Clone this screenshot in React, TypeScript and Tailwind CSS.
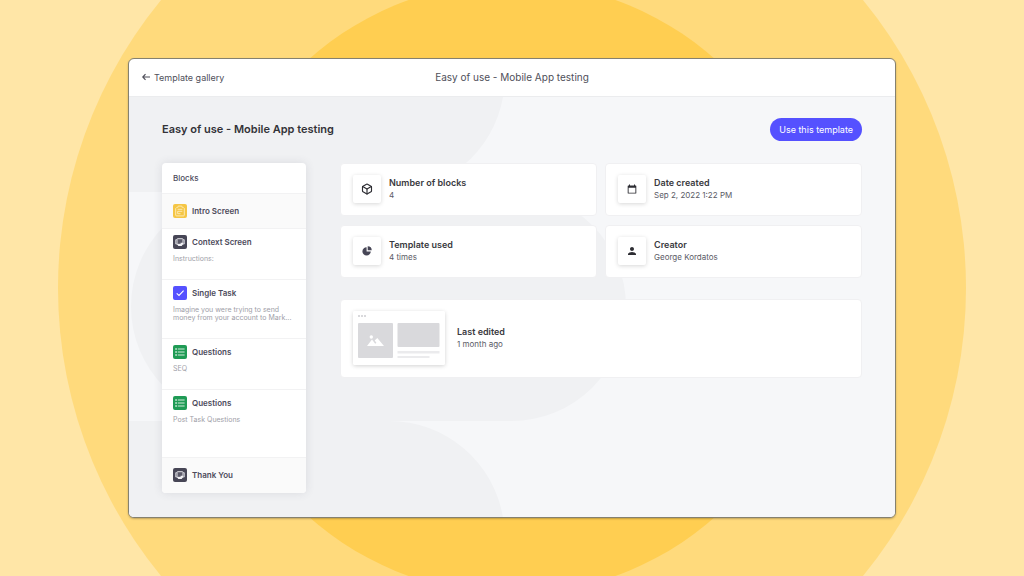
import type { ReactNode } from "react";
import { Box } from "lucide-react";
import { MdPerson } from "react-icons/md";

type BlockKind = "intro" | "screen" | "task" | "questions";

interface Block {
  kind: BlockKind;
  title: string;
  note?: string;
  className: string;
}

const blocks: Block[] = [
  { kind: "intro", title: "Intro Screen", className: "bg-[#fafafa] py-[10px] border-b" },
  { kind: "screen", title: "Context Screen", note: "Instructions:", className: "pt-[6px] pb-4 border-b" },
  {
    kind: "task",
    title: "Single Task",
    note: "Imagine you were trying to send money from your account to Mark...",
    className: "pt-[6px] pb-4 border-b",
  },
  { kind: "questions", title: "Questions", note: "SEQ", className: "pt-[6px] pb-4 border-b" },
  { kind: "questions", title: "Questions", note: "Post Task Questions", className: "grow pt-[6px] pb-4 border-b" },
  { kind: "screen", title: "Thank You", className: "bg-[#fafafa] pt-[10px] pb-[11px]" },
];

function BlockIcon({ kind }: { kind: BlockKind }) {
  if (kind === "intro") {
    return (
      <svg viewBox="0 0 14 14" className="size-[14px] shrink-0" aria-hidden="true">
        <rect width="14" height="14" rx="2" fill="#f5c645" />
        <g fill="none" stroke="#fff3cd" strokeWidth="0.8">
          <path d="M4.5 3.3h-.6L2.700 4.500v6.600a.8.8 0 0 0 .8.8h7a.8.8 0 0 0 .8-.8V4.500l-1.200-1.200h-.6" />
          <path d="M4.800 3.600V3a.9.9 0 0 1 .9-.9h2.600a.9.9 0 0 1 .9.900v.6" />
          <path d="M4.600 5.300h4.800M4.700 7.300h4.600M4.700 7.300v2.400h2.800" />
        </g>
      </svg>
    );
  }
  if (kind === "screen") {
    return (
      <svg viewBox="0 0 14 14" className="size-[14px] shrink-0" aria-hidden="true">
        <rect width="14" height="14" rx="2" fill="#474656" />
        <path
          d="M4 4.700H2.700v4.300H4M10 4.700h1.300v4.300H10"
          fill="none"
          stroke="#c9c9d1"
          strokeWidth="1"
          strokeLinejoin="round"
        />
        <rect x="4" y="3.700" width="6" height="5.600" rx="0.600" fill="#5b5a69" stroke="#f1f1f4" strokeWidth="0.900" />
        <path d="M4 8.900h6l-1.300 2H5.300zM7.600 7.800H10v1.500H7.600z" fill="#f1f1f4" />
      </svg>
    );
  }
  if (kind === "task") {
    return (
      <svg viewBox="0 0 14 14" className="size-[14px] shrink-0" aria-hidden="true">
        <rect width="14" height="14" rx="2" fill="#5551ff" />
        <path d="M3.700 7.300 6 9.400l4.600-4.700" fill="none" stroke="#fff" strokeWidth="1.100" />
      </svg>
    );
  }
  return (
    <svg viewBox="0 0 14 14" className="size-[14px] shrink-0" aria-hidden="true">
      <rect width="14" height="14" rx="2" fill="#1f9b55" />
      <path d="M4.800 4h6.800M4.800 7h6.800M4.800 10h6.800" stroke="#e6f5ec" strokeWidth="0.900" />
      <path d="M2.400 4h1.300M2.400 7h1.300M2.400 10h1.300" stroke="#fff" strokeWidth="1.300" />
    </svg>
  );
}

function BackArrow() {
  return (
    <svg viewBox="0 0 8 8" className="size-2" fill="none" stroke="currentColor" strokeWidth="1.200" aria-hidden="true">
      <path d="M8 4H1M3.500 1.200.8 4l2.700 2.800" />
    </svg>
  );
}

function CalendarIcon() {
  return (
    <svg viewBox="0 0 10 10" className="size-[10px]" aria-hidden="true">
      <path
        fill="currentColor"
        fillRule="evenodd"
        d="M2 .5h1v1h4v-1h1v1h.7a.6.600 0 0 1 .6.600v6.800a.6.600 0 0 1-.6.600H1.300a.6.600 0 0 1-.6-.600V2.100a.6.600 0 0 1 .6-.600H2zM1.600 3.700v5h6.800v-5z"
      />
    </svg>
  );
}

function PieIcon() {
  return (
    <svg viewBox="0 0 10 10" className="size-[10px]" fill="#474656" aria-hidden="true">
      <path d="M4.600 1.200v4.200h4.200A4.200 4.200 0 1 1 4.600 1.200z" />
      <path d="M5.700.3a4 4 0 0 1 4 4h-4z" />
    </svg>
  );
}

function Stat({ icon, label, value }: { icon: ReactNode; label: string; value: string }) {
  return (
    <div className="flex h-[53px] items-center gap-2 rounded-sm border border-[#f0f0f2] bg-white px-3">
      <div className="flex size-7 items-center justify-center rounded-xs text-[#2d2d33] shadow-[0_1px_4px_rgba(0,0,0,0.16)]">
        {icon}
      </div>
      <Labels label={label} value={value} />
    </div>
  );
}

function Labels({ label, value }: { label: string; value: string }) {
  return (
    <dl>
      <dt className="text-[9px] leading-3 font-semibold text-[#3a3a40]">{label}</dt>
      <dd className="text-[8px] leading-3 text-[#5b5b66]">{value}</dd>
    </dl>
  );
}

function Thumbnail() {
  return (
    <svg
      viewBox="0 0 92 54"
      className="h-[54px] w-[92px] shrink-0 rounded-xs shadow-[0_1px_4px_rgba(0,0,0,0.18)]"
      aria-hidden="true"
    >
      <rect width="92" height="54" fill="#fff" />
      <g fill="#d9d9dc">
        <rect x="5" y="4" width="2" height="2" />
        <rect x="8" y="4" width="2" height="2" />
        <rect x="11" y="4" width="2" height="2" />
        <rect x="5" y="12" width="35" height="35" rx="1" />
        <rect x="44.500" y="12" width="42" height="24" rx="1" />
      </g>
      <rect x="44.500" y="40" width="42" height="2.500" fill="#ebebed" />
      <rect x="44.500" y="45" width="32" height="2" fill="#ebebed" />
      <circle cx="18.300" cy="26" r="1.700" fill="#fff" />
      <path d="M14 35l5-6.500 3.200 4.200 1.200-.9-1.700-2.300 2.600-2.500L31 35z" fill="#fff" />
    </svg>
  );
}

export default function App() {
  return (
    <div className="relative flex min-h-screen items-center justify-center overflow-hidden bg-[#ffe6a7] pb-px font-['Inter',sans-serif] antialiased">
      <div className="absolute top-1/2 left-1/2 size-[908px] -translate-1/2 rounded-full bg-[#ffda7c]" />
      <div className="absolute top-1/2 left-1/2 size-[612px] -translate-1/2 rounded-full bg-[#ffce51]" />

      <div className="relative w-3/4 overflow-hidden rounded-md border border-[#85816f] bg-white shadow-[0_1px_2px_rgba(0,0,0,0.25)]">
        <header className="grid grid-cols-[1fr_auto_1fr] items-center border-b border-[#ebecee] px-[13px] py-[11px] text-[#4f4f5a]">
          <a href="#gallery" className="flex items-center gap-1 text-[9px] leading-[15px]">
            <BackArrow />
            Template gallery
          </a>
          <p className="text-[10px] leading-[15px]">Easy of use - Mobile App testing</p>
        </header>

        <main className="relative overflow-hidden bg-[#f6f7f9] px-[33px] pt-[21px] pb-6">
          <svg className="absolute top-0 left-0 h-[421px] w-[766px]" viewBox="129 97 766 421" aria-hidden="true">
            <g fill="#f0f1f3">
              <path d="M129 97H503A115 115 0 0 1 389 192H129z" />
              <rect x="131" y="192" width="495" height="229" rx="114.500" />
              <path d="M129 421H389A115 115 0 0 1 503 518H129z" />
            </g>
          </svg>

          <div className="relative flex items-center justify-between">
            <h1 className="text-[11px] leading-4 font-semibold text-[#333338]">Easy of use - Mobile App testing</h1>
            <button
              type="button"
              className="rounded-full bg-[#5551ff] px-[9px] py-1 text-[9px] leading-[15px] text-white"
            >
              Use this template
            </button>
          </div>

          <div className="relative mt-[22px] flex items-start gap-[34px]">
            <aside className="flex h-[330px] w-36 shrink-0 flex-col overflow-hidden rounded-sm bg-white shadow-[0_0_10px_rgba(60,60,80,0.12)]">
              <h2 className="border-b border-[#f2f2f3] px-[11px] py-[9px] text-[8px] leading-3 font-medium text-[#4c4b5b]">
                Blocks
              </h2>
              <ul className="flex grow flex-col">
                {blocks.map((block, i) => (
                  <li key={i} className={`border-[#f2f2f3] px-[11px] ${block.className}`}>
                    <div className="flex items-center gap-[5px] text-[8px] leading-[14px] font-semibold text-[#4c4b5b]">
                      <BlockIcon kind={block.kind} />
                      {block.title}
                    </div>
                    {block.note && <p className="mt-[6px] text-[7px] leading-2 text-[#a0a0a8]">{block.note}</p>}
                  </li>
                ))}
              </ul>
            </aside>

            <section className="grid grow grid-cols-2 gap-x-2 gap-y-[9px]">
              <Stat icon={<Box className="size-3" strokeWidth={2.3} />} label="Number of blocks" value="4" />
              <Stat icon={<CalendarIcon />} label="Date created" value="Sep 2, 2022 1:22 PM" />
              <Stat icon={<PieIcon />} label="Template used" value="4 times" />
              <Stat icon={<MdPerson className="size-3" />} label="Creator" value="George Kordatos" />
              <div className="col-span-2 mt-3 flex h-[79px] items-center gap-3 rounded-sm border border-[#f0f0f2] bg-white px-3">
                <Thumbnail />
                <Labels label="Last edited" value="1 month ago" />
              </div>
            </section>
          </div>
        </main>
      </div>
    </div>
  );
}
